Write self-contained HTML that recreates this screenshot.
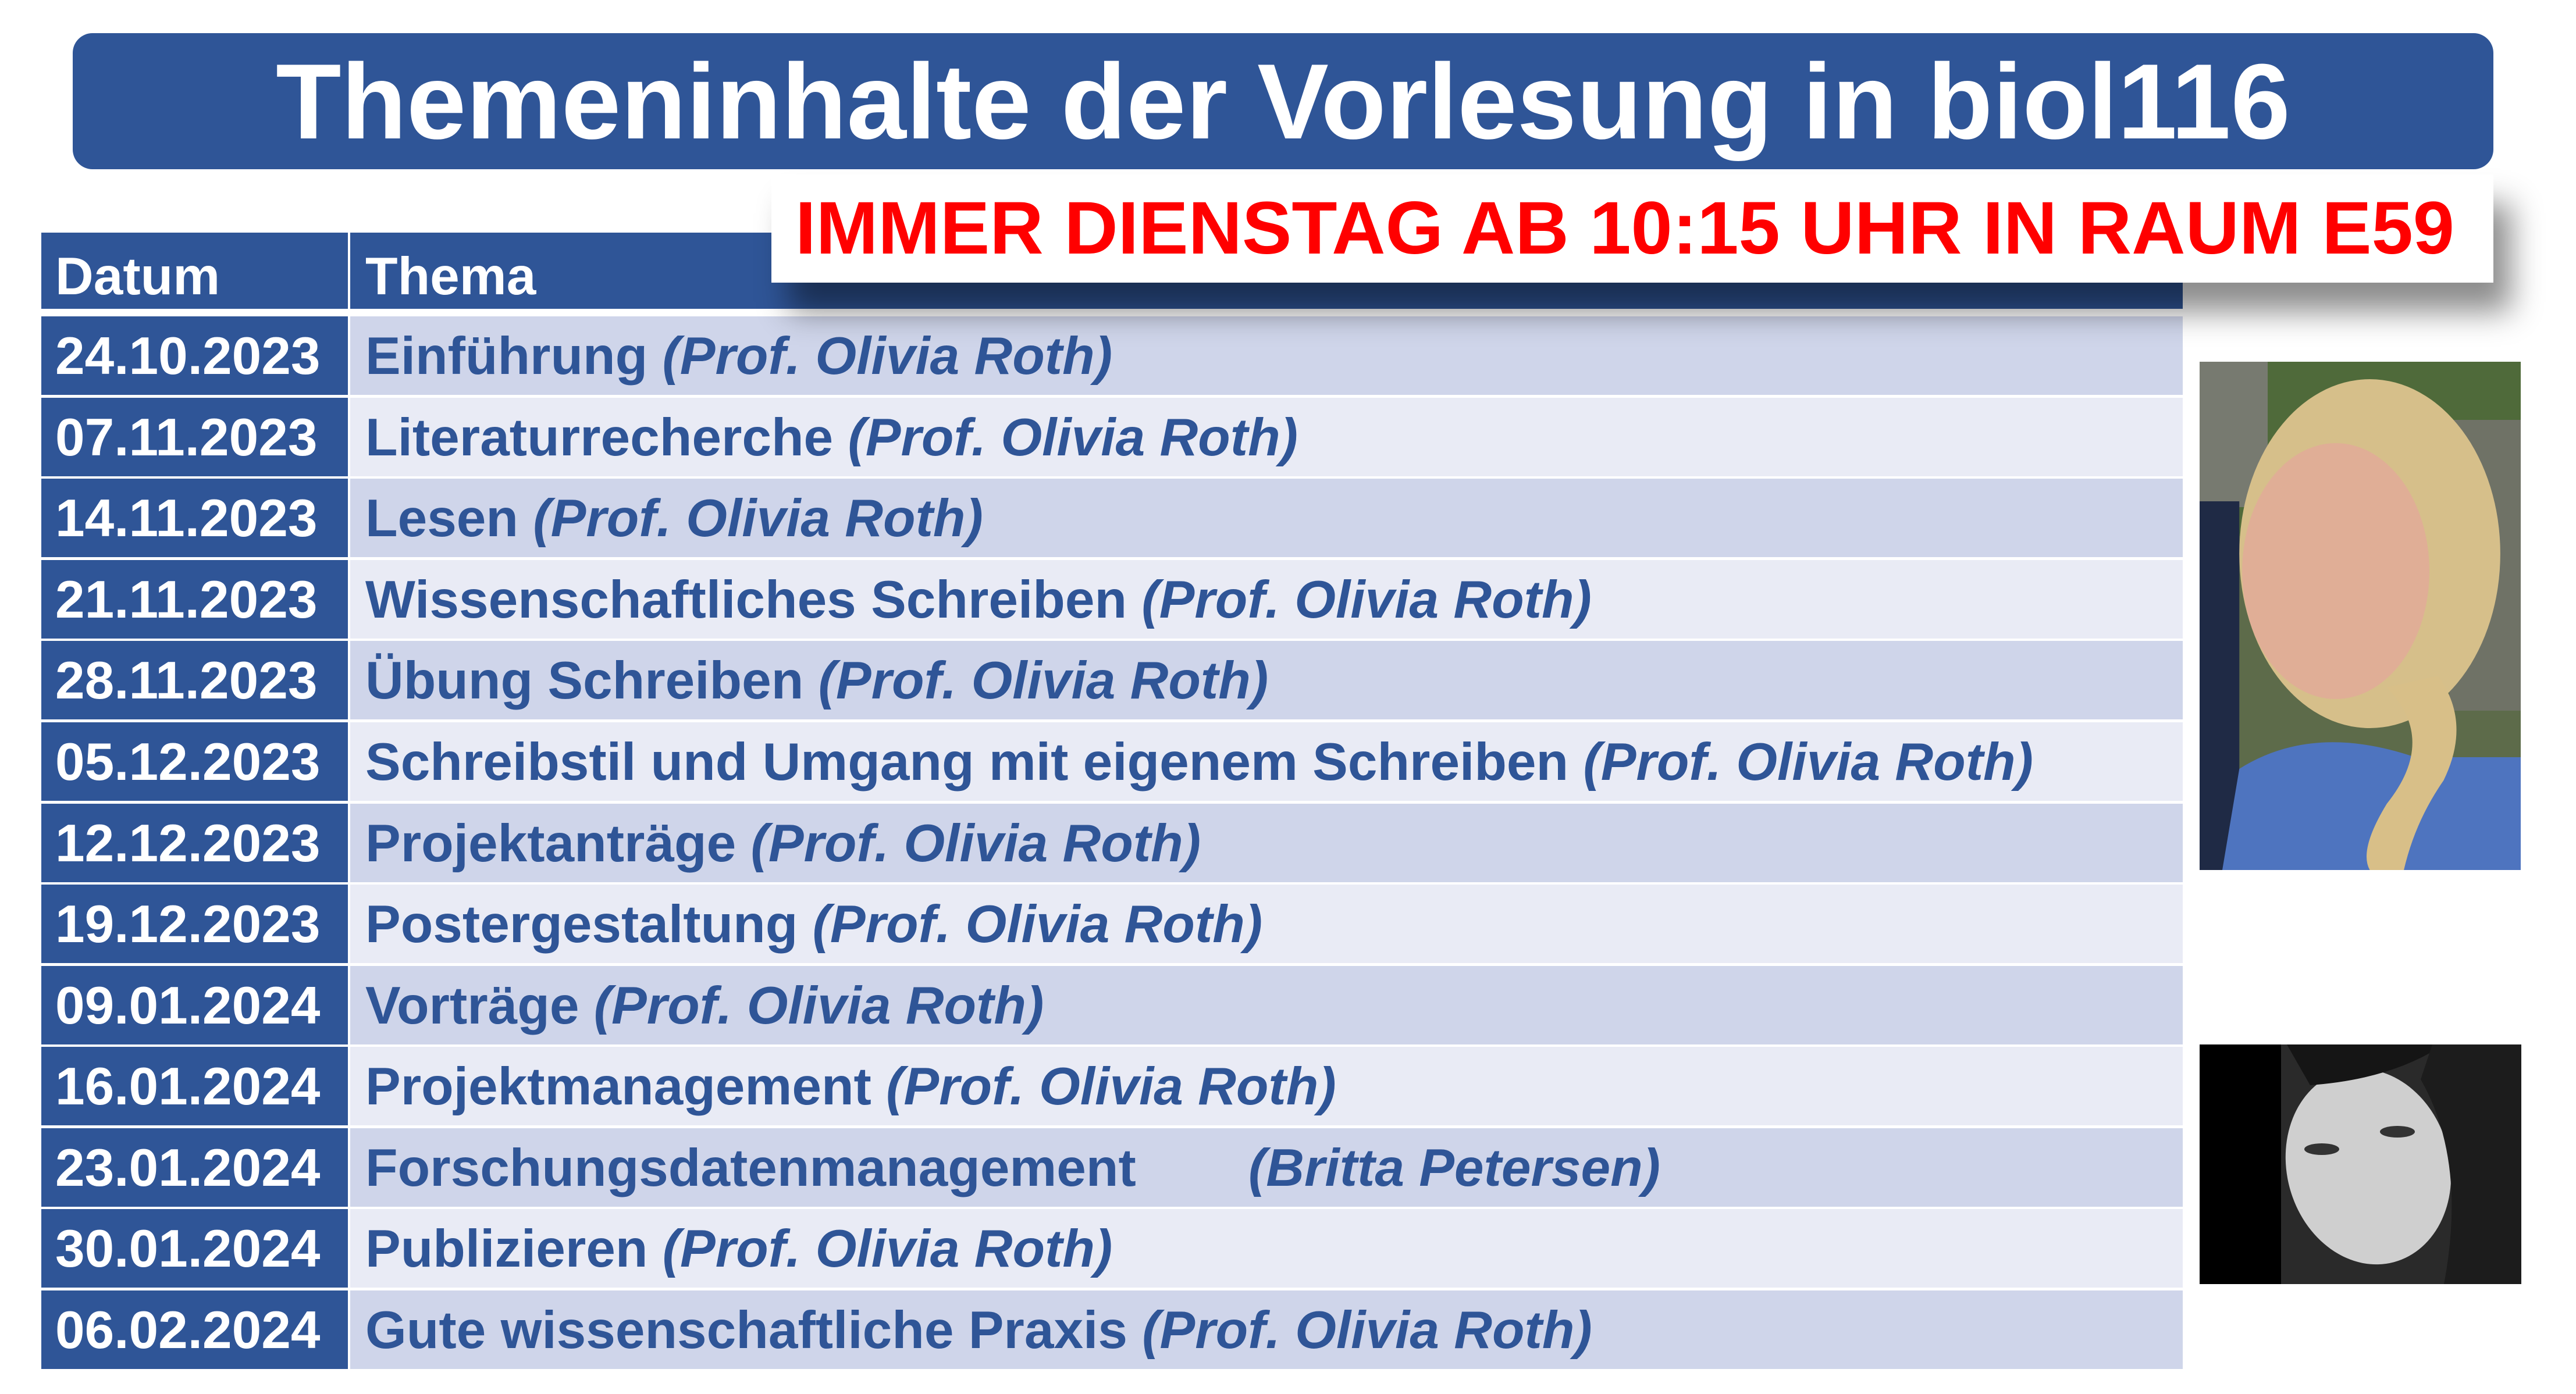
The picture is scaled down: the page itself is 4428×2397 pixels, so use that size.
<!DOCTYPE html>
<html><head><meta charset="utf-8"><style>
*{margin:0;padding:0;box-sizing:border-box}
body{width:4428px;height:2397px;background:#fff;position:relative;overflow:hidden;font-family:"Liberation Sans",Arial,sans-serif;font-weight:bold}
.title{position:absolute;left:125px;top:57px;width:4161px;height:234px;background:#2f5597;border-radius:34px;color:#fff;font-size:184px;line-height:234px;text-align:center;letter-spacing:0px}
.c{position:absolute;height:135px;line-height:137px;font-size:91px;white-space:nowrap}
.d{left:71px;width:527px;background:#2f5597;color:#fff;padding-left:24px}
.t{left:602px;width:3150px;color:#2f5597;padding-left:26px}
.o{background:#cfd5ea}.e{background:#e9ebf5}
i{font-style:italic}
.banner{position:absolute;left:1326px;top:300px;width:2960px;height:186px;background:#fff;box-shadow:30px 50px 50px rgba(0,0,0,0.45);}
.banner span{position:absolute;left:41px;top:18px;color:#ff0000;font-size:128px;line-height:150px;white-space:nowrap}
</style></head><body>
<div class="title">Themeninhalte der Vorlesung in biol116</div>

<div class="c d" style="top:400px;height:131px;line-height:152px">Datum</div>
<div class="c t" style="top:400px;height:131px;line-height:152px;background:#2f5597;color:#fff">Thema</div>

<div class="c d" style="top:544px">24.10.2023</div><div class="c t o" style="top:544px">Einführung <i>(Prof. Olivia Roth)</i></div>
<div class="c d" style="top:684px">07.11.2023</div><div class="c t e" style="top:684px">Literaturrecherche <i>(Prof. Olivia Roth)</i></div>
<div class="c d" style="top:823px">14.11.2023</div><div class="c t o" style="top:823px">Lesen <i>(Prof. Olivia Roth)</i></div>
<div class="c d" style="top:963px">21.11.2023</div><div class="c t e" style="top:963px">Wissenschaftliches Schreiben <i>(Prof. Olivia Roth)</i></div>
<div class="c d" style="top:1102px">28.11.2023</div><div class="c t o" style="top:1102px">Übung Schreiben <i>(Prof. Olivia Roth)</i></div>
<div class="c d" style="top:1242px">05.12.2023</div><div class="c t e" style="top:1242px">Schreibstil und Umgang mit eigenem Schreiben <i>(Prof. Olivia Roth)</i></div>
<div class="c d" style="top:1382px">12.12.2023</div><div class="c t o" style="top:1382px">Projektanträge <i>(Prof. Olivia Roth)</i></div>
<div class="c d" style="top:1521px">19.12.2023</div><div class="c t e" style="top:1521px">Postergestaltung <i>(Prof. Olivia Roth)</i></div>
<div class="c d" style="top:1661px">09.01.2024</div><div class="c t o" style="top:1661px">Vorträge <i>(Prof. Olivia Roth)</i></div>
<div class="c d" style="top:1800px">16.01.2024</div><div class="c t e" style="top:1800px">Projektmanagement <i>(Prof. Olivia Roth)</i></div>
<div class="c d" style="top:1940px">23.01.2024</div><div class="c t o" style="top:1940px">Forschungsdatenmanagement<i style="position:absolute;left:1544px">(Britta Petersen)</i></div>
<div class="c d" style="top:2079px">30.01.2024</div><div class="c t e" style="top:2079px">Publizieren <i>(Prof. Olivia Roth)</i></div>
<div class="c d" style="top:2219px">06.02.2024</div><div class="c t o" style="top:2219px">Gute wissenschaftliche Praxis <i>(Prof. Olivia Roth)</i></div>

<div class="banner"><span>IMMER DIENSTAG AB 10:15 UHR IN RAUM E59</span></div>

<svg style="position:absolute;left:3781px;top:622px" width="552" height="874" viewBox="0 0 566 874" preserveAspectRatio="none">
<rect width="566" height="874" fill="#5d6b4a"/>
<rect x="0" y="0" width="566" height="300" fill="#4f6a3a"/>
<rect x="0" y="0" width="120" height="250" fill="#777a70"/>
<rect x="440" y="100" width="126" height="500" fill="#6f7266"/>
<rect x="0" y="240" width="70" height="634" fill="#1f2a45"/>
<ellipse cx="300" cy="330" rx="230" ry="300" fill="#d6bf8a"/>
<ellipse cx="240" cy="360" rx="165" ry="220" fill="#e0ae96"/>
<path d="M40 874 L70 700 Q200 620 380 680 L566 680 L566 874 Z" fill="#4e74bf"/>
<path d="M330 560 Q420 650 330 760 Q280 840 300 874 L360 874 Q380 790 430 720 Q480 620 420 540 Z" fill="#d8bf88"/>
</svg>
<svg style="position:absolute;left:3781px;top:1796px" width="553" height="412" viewBox="0 0 553 412">
<rect width="553" height="412" fill="#000"/>
<path d="M140 0 L553 0 L553 412 L140 412 Z" fill="#2a2a2a"/>
<ellipse cx="290" cy="210" rx="140" ry="170" fill="#cfcfcf" transform="rotate(-15 290 210)"/>
<path d="M150 0 L420 0 Q330 60 190 70 Z" fill="#151515"/>
<path d="M380 60 Q460 200 420 412 L553 412 L553 0 L400 0 Z" fill="#1c1c1c"/>
<ellipse cx="210" cy="180" rx="30" ry="10" fill="#333"/>
<ellipse cx="340" cy="150" rx="30" ry="10" fill="#333"/>
</svg>
</body></html>
